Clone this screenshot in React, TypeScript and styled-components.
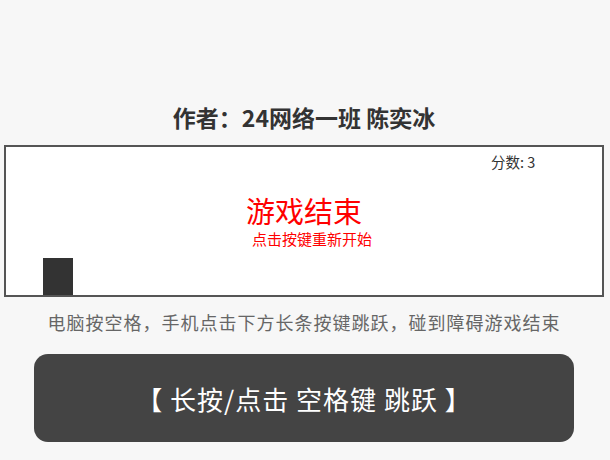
import React from 'react';
import styled, { createGlobalStyle } from 'styled-components';

const GlobalStyle = createGlobalStyle`
	html, body {
		margin: 0;
		padding: 0;
		background: #f7f7f7;
	}
	body {
		font-family: "Noto Sans CJK SC", "Liberation Sans", sans-serif;
	}
`;

const Page = styled.div`
	display: flex;
	flex-direction: column;
	align-items: center;
	padding: 102px 2px 0 0;
	height: 460px;
	box-sizing: border-box;
`;

const Title = styled.h2`
	margin: 0 0 12px;
	font-size: 23px;
	line-height: 31px;
	font-weight: 700;
	color: #333;
`;

// the game canvas: everything inside is drawn at free positions
const GameBox = styled.div`
	position: relative;
	width: 600px;
	height: 152px;
	box-sizing: border-box;
	border: 2px solid #555;
	background: #fff;
	overflow: hidden;
`;

const Score = styled.span`
	position: absolute;
	left: 485px;
	top: 8px;
	font-size: 14.5px;
	line-height: 1;
	color: #333;
`;

const GameOver = styled.div`
	position: absolute;
	left: 0;
	right: 0;
	top: 49px;
	display: flex;
	flex-direction: column;
	align-items: center;
	gap: 6px;
	color: #f00;
	white-space: nowrap;
`;

const OverTitle = styled.span`
	font-size: 29px;
	line-height: 29px;
	height: 29px;
	overflow: visible;
`;

const OverSub = styled.span`
	font-size: 15px;
	line-height: 15px;
	padding-left: 16px;
`;

const Player = styled.div`
	position: absolute;
	left: 37px;
	bottom: 0;
	width: 30px;
	height: 37px;
	background: #333;
`;

const Hint = styled.p`
	margin: 12px 0 19px;
	font-size: 18px;
	line-height: 26px;
	color: #666;
	letter-spacing: 1px;
`;

const JumpButton = styled.button`
	width: 540px;
	height: 88px;
	border: none;
	border-radius: 14px;
	background: #444;
	color: #fff;
	font-family: "Noto Sans CJK SC", "Liberation Sans", sans-serif;
	font-size: 26px;
	letter-spacing: 1px;
	cursor: pointer;
	display: flex;
	align-items: center;
	justify-content: center;
	padding: 0;
`;

export default function App() {
	const score = 3;
	return (
		<>
			<GlobalStyle />
			<Page>
				<Title>作者：24网络一班 陈奕冰</Title>
				<GameBox>
					<Score>分数: {score}</Score>
					<GameOver>
						<OverTitle>游戏结束</OverTitle>
						<OverSub>点击按键重新开始</OverSub>
					</GameOver>
					<Player />
				</GameBox>
				<Hint>电脑按空格，手机点击下方长条按键跳跃，碰到障碍游戏结束</Hint>
				<JumpButton>【 长按/点击 空格键 跳跃 】</JumpButton>
			</Page>
		</>
	);
}
